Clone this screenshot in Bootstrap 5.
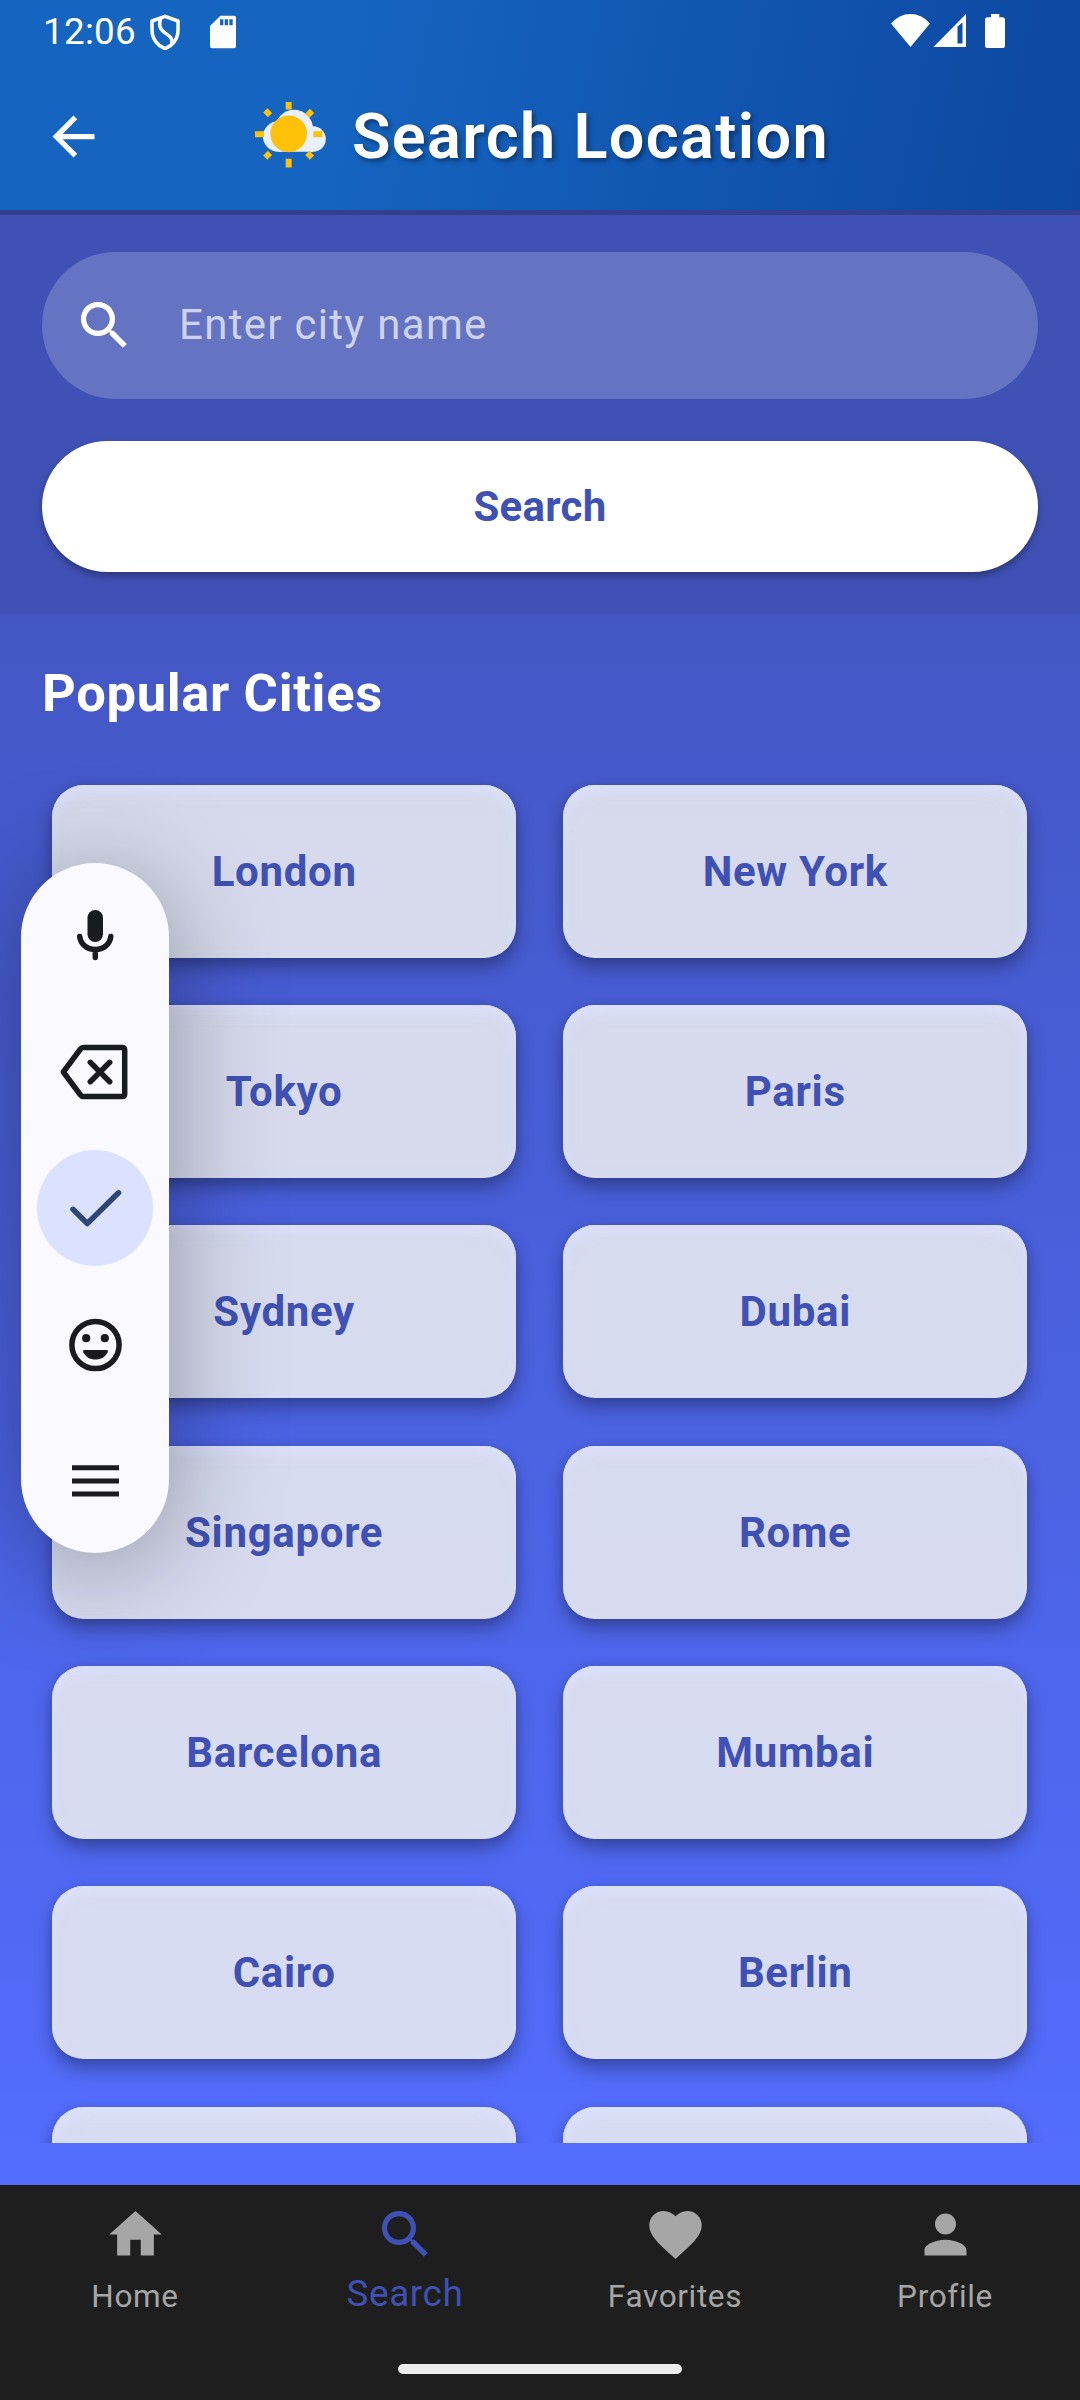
<!DOCTYPE html>
<html lang="en">
<head>
<meta charset="utf-8">
<meta name="viewport" content="width=device-width, initial-scale=1">
<title>Search Location</title>
<link href="https://cdn.jsdelivr.net/npm/bootstrap@5.3.0/dist/css/bootstrap.min.css" rel="stylesheet">
<style>
  :root { --indigo: #3f51b5; }
  body { font-family: Roboto, "Liberation Sans", sans-serif; background: #1e1e1e; }
  .screen { width: 1080px; height: 2400px; }
  .app-header { height: 210px; background: linear-gradient(101deg, #1565c0 30%, #0d47a1 100%); }
  .status-bar { height: 63px; padding: 0 75px 0 43px; }
  .clock { font-size: 36.75px; line-height: 63px; width: 106.300px; letter-spacing: .3px; }
  .sd-icon { margin-left: 28.700px; }
  .title-bar { height: 147px; padding-left: 42px; }
  .title-group { margin-left: 149px; }
  .app-title { font-size: 63px; line-height: 74px; font-weight: 600; letter-spacing: 1.35px; margin-left: 26px; text-shadow: 2.6px 2.6px 5px rgba(0,0,0,.4); }
  .app-body { height: 1975px; background: linear-gradient(180deg, #3f51b5, #536dfe); }
  .search-panel { height: 404px; padding: 37px 42px 42px; background: var(--indigo); border-top: 5px solid #34408f; }
  .search-field { height: 147px; padding-left: 31px; background: rgba(255,255,255,.2); }
  .search-field input { font-size: 42px; letter-spacing: 1.3px; margin: 0 0 2px 43px; }
  .search-field input::placeholder { color: rgba(255,255,255,.7); opacity: 1; }
  .search-btn { height: 131px; margin-top: 42px; font-size: 42px; font-weight: 700; letter-spacing: .26px; color: var(--indigo); box-shadow: 0 4px 7px rgba(0,0,0,.32); }
  .section-title { font-size: 52.5px; line-height: 62px; font-weight: 700; letter-spacing: .66px; margin: 48px 42px 0; }
  .city-scroll { height: 1419px; padding: 50px 42px 0; }
  .city-grid { display: grid; grid-template-columns: 1fr 1fr; grid-auto-rows: 194px; gap: 26.35px 26.2px; }
  .city-tile { margin: 10.5px 10.8px 10.5px 10.2px; border-radius: 32px; font-size: 42px; font-weight: 700; letter-spacing: .68px; color: var(--indigo);
    background: rgba(241,241,241,.848);
    box-shadow: 0 10px 18px rgba(0,0,0,.3), 0 1px 8px rgba(0,0,0,.1),
      inset 0 12px 16px -6px rgba(220,225,252,.8), inset 0 5px 16px -2px rgba(220,225,252,.7); }
  .bottom-nav { height: 215px; background: #1e1e1e; color: #a6a6a6; }
  .nav-row { height: 147px; padding-top: 18px; }
  .nav-text { font-size: 31.5px; line-height: 38px; letter-spacing: .66px; margin-top: 12px; }
  .nav-current { color: var(--indigo); }
  .nav-current .nav-text { font-size: 36.75px; margin-top: 9px; }
  .icon-24 { width: 63px; height: 63px; fill: currentColor; display: block; }
  .home-handle { width: 284px; height: 10px; border-radius: 5px; background: #ececec; margin-top: 32px; }
  .ime-pill { left: 21px; top: 863px; width: 148px; height: 690px; gap: 20.5px; border-radius: 74px; background: #faf9ff; color: #1a1b20; box-shadow: 0 14px 110px rgba(0,0,0,.34); }
  .ime-key { width: 116px; height: 116px; display: block; fill: none; stroke: currentColor; stroke-width: 5.5; stroke-linecap: round; stroke-linejoin: round; }
  .ime-enter { background: #dae2ff; color: #2f4578; }
</style>
</head>
<body>
<div class="screen position-relative overflow-hidden d-flex flex-column">
  <header class="app-header text-white">
    <div class="status-bar d-flex align-items-center">
      <span class="clock">12:06</span>
      <svg width="32" height="36" viewBox="28 24 96 108" fill="none" stroke="#fff" stroke-width="10.500" stroke-linejoin="round"><path d="M76 31 37 45V72C37 100 55 120 76 128 97 120 115 100 115 72V45Z"/><path d="M63 37C56 58 60 70 78 82 92 91 99 98 96 113"/></svg>
      <svg class="sd-icon" width="26" height="36" viewBox="210 26 78 108" fill="#fff" fill-rule="evenodd"><path d="M241 31H282q6 0 6 6V123q0 6-6 6H216q-6 0-6-6V62ZM240 42V60h10V42ZM254 42V60h10V42ZM268 42V60h10V42Z"/></svg>
      <svg class="ms-auto" width="114" height="63" viewBox="891 0 114 63" fill="#fff" fill-rule="evenodd"><path d="M910.500 47 891 23.500Q899 14 910.500 14T930 23.500Z"/><path d="M933.500 47H966V14ZM957.500 26.500 962.500 22.500V43.500H957.500Z"/><path d="M991 14h8.300v3.300h3.200q2.500 0 2.500 2.500V45.500q0 2.500-2.500 2.500H987.500q-2.500 0-2.500-2.500V19.800q0-2.500 2.500-2.500H991Z"/></svg>
    </div>
    <div class="title-bar d-flex align-items-center">
      <svg class="icon-24" viewBox="0 0 24 24"><path d="M20 11H7.830l5.590-5.590L12 4l-8 8 8 8 1.410-1.410L7.830 13H20z"/></svg>
      <div class="title-group d-flex align-items-center">
        <svg width="72" height="69" viewBox="27 37.500 216 207">
          <g fill="#e8f0fb"><circle cx="100" cy="141" r="46"/><circle cx="147" cy="118" r="57"/><circle cx="204" cy="148.500" r="38.500"/><path d="M100 130H204V187H100Z"/></g>
          <g fill="#ffc107"><circle cx="131" cy="133" r="55"/>
            <path d="M122 34h18v26h-18zM122 208h18v26h-18zM30 125h27v18H30zM205 125h27v18h-27z"/>
            <rect x="59" y="60" width="18" height="20" transform="rotate(-45 68 70)"/>
            <rect x="185" y="61" width="18" height="20" transform="rotate(45 194 71)"/>
            <rect x="59" y="187" width="18" height="20" transform="rotate(45 68 197)"/>
            <rect x="185" y="187" width="18" height="20" transform="rotate(-45 194 197)"/></g>
        </svg>
        <h1 class="app-title mb-0">Search Location</h1>
      </div>
    </div>
  </header>
  <main class="app-body d-flex flex-column">
    <section class="search-panel">
      <div class="search-field rounded-pill d-flex align-items-center text-white">
        <svg class="icon-24" viewBox="0 0 24 24"><path d="M15.500 14h-.790l-.280-.270A6.471 6.471 0 0 0 16 9.500 6.500 6.500 0 1 0 9.500 16c1.610 0 3.090-.590 4.230-1.570l.270.280v.790l5 4.990L20.490 19l-4.990-5zm-6 0C7.010 14 5 11.990 5 9.500S7.010 5 9.500 5 14 7.010 14 9.500 11.990 14 9.500 14z"/></svg>
        <input class="border-0 bg-transparent text-white p-0" type="text" placeholder="Enter city name">
      </div>
      <button class="search-btn btn btn-light bg-white border-0 rounded-pill w-100" type="button">Search</button>
    </section>
    <h2 class="section-title text-white">Popular Cities</h2>
    <div class="city-scroll overflow-hidden">
      <div class="city-grid">
        <div class="city-tile d-flex align-items-center justify-content-center">London</div>
        <div class="city-tile d-flex align-items-center justify-content-center">New York</div>
        <div class="city-tile d-flex align-items-center justify-content-center">Tokyo</div>
        <div class="city-tile d-flex align-items-center justify-content-center">Paris</div>
        <div class="city-tile d-flex align-items-center justify-content-center">Sydney</div>
        <div class="city-tile d-flex align-items-center justify-content-center">Dubai</div>
        <div class="city-tile d-flex align-items-center justify-content-center">Singapore</div>
        <div class="city-tile d-flex align-items-center justify-content-center">Rome</div>
        <div class="city-tile d-flex align-items-center justify-content-center">Barcelona</div>
        <div class="city-tile d-flex align-items-center justify-content-center">Mumbai</div>
        <div class="city-tile d-flex align-items-center justify-content-center">Cairo</div>
        <div class="city-tile d-flex align-items-center justify-content-center">Berlin</div>
        <div class="city-tile"></div>
        <div class="city-tile"></div>
      </div>
    </div>
  </main>
  <footer class="bottom-nav d-flex flex-column align-items-center">
    <nav class="nav-row row g-0 w-100 text-center">
      <div class="col-3 d-flex flex-column align-items-center">
        <svg class="icon-24" viewBox="0 0 24 24"><path d="M10 20v-6h4v6h5v-8h3L12 3 2 12h3v8z"/></svg>
        <span class="nav-text">Home</span>
      </div>
      <div class="col-3 d-flex flex-column align-items-center nav-current">
        <svg class="icon-24" viewBox="0 0 24 24"><path d="M15.500 14h-.790l-.280-.270A6.471 6.471 0 0 0 16 9.500 6.500 6.500 0 1 0 9.500 16c1.610 0 3.090-.590 4.230-1.570l.270.280v.790l5 4.990L20.490 19l-4.990-5zm-6 0C7.010 14 5 11.990 5 9.500S7.010 5 9.500 5 14 7.010 14 9.500 11.990 14 9.500 14z"/></svg>
        <span class="nav-text">Search</span>
      </div>
      <div class="col-3 d-flex flex-column align-items-center">
        <svg class="icon-24" viewBox="0 0 24 24"><path d="m12 21.350-1.450-1.320C5.400 15.360 2 12.280 2 8.500 2 5.420 4.420 3 7.500 3c1.740 0 3.410.810 4.500 2.090C13.090 3.810 14.760 3 16.500 3 19.580 3 22 5.420 22 8.500c0 3.780-3.400 6.860-8.550 11.540z"/></svg>
        <span class="nav-text">Favorites</span>
      </div>
      <div class="col-3 d-flex flex-column align-items-center">
        <svg class="icon-24" viewBox="0 0 24 24"><path d="M12 12c2.210 0 4-1.790 4-4s-1.790-4-4-4-4 1.790-4 4 1.790 4 4 4zm0 2c-2.670 0-8 1.340-8 4v2h16v-2c0-2.660-5.330-4-8-4z"/></svg>
        <span class="nav-text">Profile</span>
      </div>
    </nav>
    <div class="home-handle"></div>
  </footer>
  <aside class="ime-pill position-absolute d-flex flex-column align-items-center justify-content-center">
    <svg class="ime-key" viewBox="-58 -58 116 116"><rect x="-7.500" y="-25" width="15.500" height="32" rx="7.700" fill="currentColor" stroke="none"/><path d="M-15.300 1.500C-14.500 9-8 14.500.3 14.500S15 9 15.800 1.500M.3 14.500V22.500" stroke-width="5.500"/></svg>
    <svg class="ime-key" viewBox="-58 -58 116 116"><path d="M-31.700 0-14.500-23Q-13.500-24.500-11.500-24.500H27Q29.700-24.500 29.700-22V22Q29.700 24.500 27 24.500H-11.500Q-13.500 24.500-14.500 23ZM-4.700-9.700 14.700 9.700M14.700-9.700-4.700 9.700"/></svg>
    <svg class="ime-key ime-enter rounded-circle" viewBox="-58 -58 116 116"><path d="M-22 1.300-7.700 15.500 23.500-15.200"/></svg>
    <svg class="ime-key" viewBox="-58 -58 116 116"><circle cx=".5" cy="0" r="23.600"/><g fill="currentColor" stroke="none"><circle cx="-8.800" cy="-6.800" r="4.100"/><circle cx="9.800" cy="-6.800" r="4.100"/><path d="M-10.800 5H11.800Q13.600 5.200 12.800 7C10.500 12 6 14.500.5 14.500S-9.500 12-11.800 7Q-12.600 5.200-10.800 5Z"/></g></svg>
    <svg class="ime-key" viewBox="-58 -58 116 116"><path d="M-23-13.300H24M-23 0H24M-23 13H24" stroke-width="5" stroke-linecap="butt"/></svg>
  </aside>
</div>
<script src="https://cdn.jsdelivr.net/npm/bootstrap@5.3.0/dist/js/bootstrap.bundle.min.js"></script>
</body>
</html>
